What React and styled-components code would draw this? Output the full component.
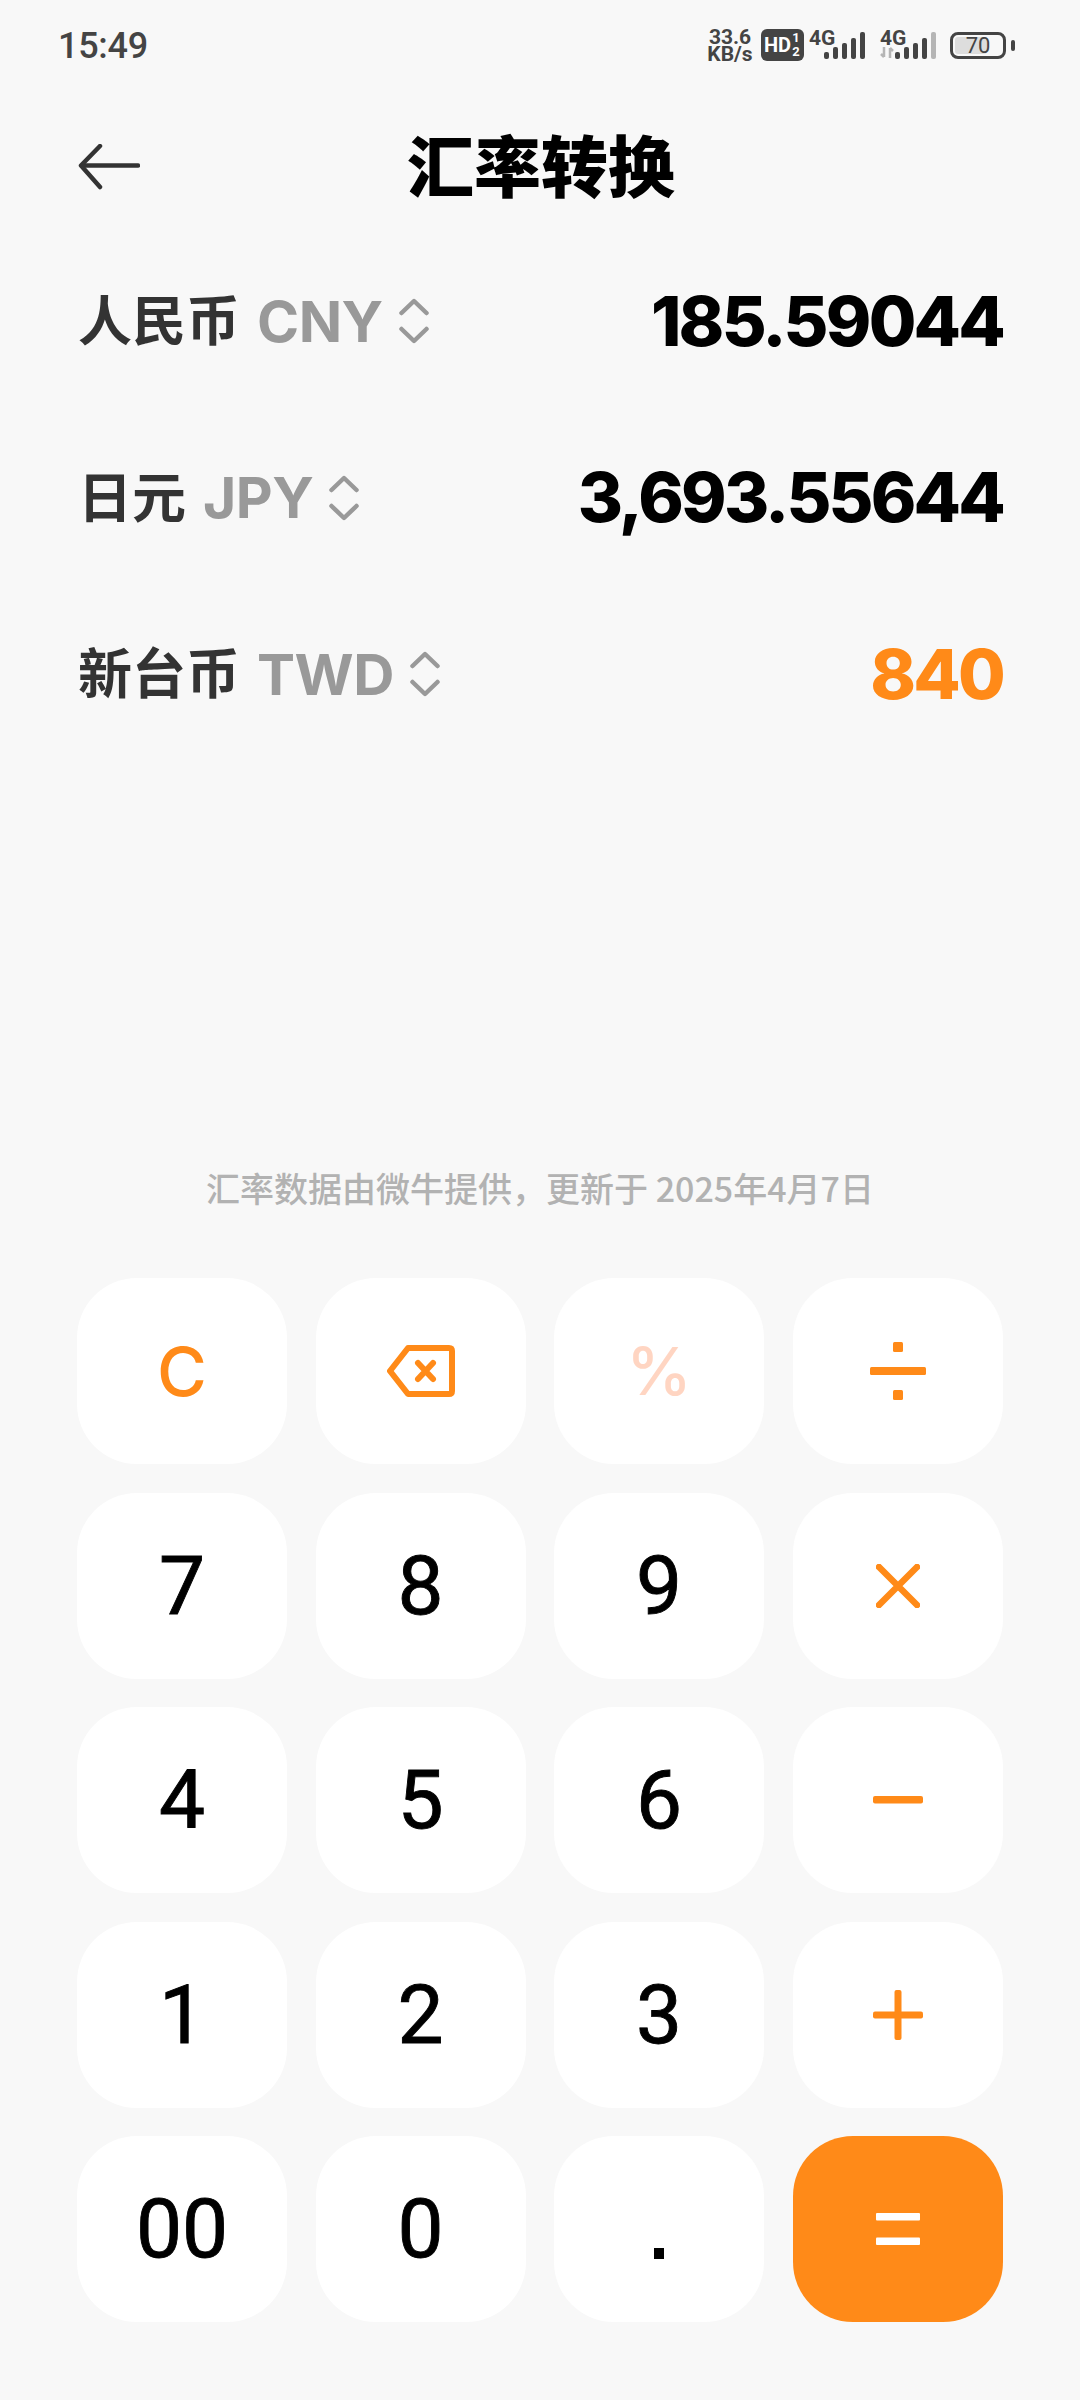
import React from "react";
import styled, { createGlobalStyle } from "styled-components";

const ORANGE = "#ff8a18";
const CJK = `"Noto Sans CJK SC", "Noto Sans", sans-serif`;
const LATIN = `Roboto, "Noto Sans CJK SC", sans-serif`;

const Global = createGlobalStyle`
  html, body { margin: 0; padding: 0; background: #f8f8f8; }
  * { box-sizing: border-box; }
`;

const Page = styled.div`
  width: 1080px;
  height: 2400px;
  background: #f8f8f8;
  display: flex;
  flex-direction: column;
  font-family: ${CJK};
  overflow: hidden;
`;

const StatusBar = styled.div`
  height: 90px;
  padding: 29px 74px 0 58px;
  display: flex;
  justify-content: space-between;
  align-items: flex-start;
  color: #444;
`;
const Clock = styled.div`
  margin-top: -2px;
  font: 500 36px/38px ${LATIN};
  letter-spacing: -0.3px;
`;
const StatusIcons = styled.div`
  display: flex;
  align-items: flex-start;
`;
const Speed = styled.div`
  font: 700 21px/17px ${LATIN};
  text-align: center;
  color: #444;
  width: 48px;
`;
const HdBadge = styled.div`
  margin-left: 7px;
  width: 43px;
  height: 32px;
  border-radius: 6px;
  background: #444;
  color: #fff;
  font: 700 20px/32px ${LATIN};
  padding-left: 3px;
  display: flex;
  align-items: center;
  gap: 1px;
`;
const HdFraction = styled.span`
  display: flex;
  flex-direction: column;
  font: 700 13px/14px ${LATIN};
  text-align: center;
`;
const Network = styled.div`
  position: relative;
  width: ${(p) => p.$w}px;
  height: 32px;
  margin-left: ${(p) => p.$ml}px;
`;
const NetLabel = styled.span`
  position: absolute;
  left: 0;
  top: 1px;
  font: 700 21px/17px ${LATIN};
  color: #444;
`;
const Battery = styled.div`
  margin-left: 13px;
  margin-top: 3px;
  width: 56px;
  height: 27px;
  border: 3px solid #444;
  border-radius: 8px;
  padding: 2px;
  position: relative;
  display: flex;
`;
const BatteryFill = styled.div`
  width: 70%;
  height: 100%;
  background: #ddd;
  border-radius: 3px;
`;
const BatteryText = styled.span`
  position: absolute;
  left: 0;
  right: 0;
  top: -1px;
  text-align: center;
  font: 400 22px/23px ${LATIN};
  color: #444;
`;
const BatteryNub = styled.div`
  position: absolute;
  right: -12px;
  top: 5px;
  width: 4px;
  height: 11px;
  border-radius: 2px;
  background: #444;
`;

const Header = styled.div`
  display: grid;
  grid-template-columns: 1fr auto 1fr;
  align-items: center;
  padding: 0 76px 0 78px;
  height: 100px;
  margin-top: 26px;
`;
const BackBtn = styled.div`
  display: flex;
  align-items: center;
  margin-top: 2px;
`;
const Title = styled.h1`
  margin: -6px 0 0;
  font: 900 67px/100px ${CJK};
  color: #000;
`;

const Rows = styled.div`
  display: flex;
  flex-direction: column;
  padding: 0 77px 0 78px;
  margin-top: 17px;
`;
const Row = styled.div`
  height: 176.5px;
  display: flex;
  align-items: center;
  justify-content: space-between;
`;
const Currency = styled.div`
  display: flex;
  align-items: center;
`;
const CurName = styled.span`
  font: 700 54px/1 ${CJK};
  color: #333;
  margin-bottom: 6px;
`;
const CurCode = styled.span`
  font: 700 57px/1 Inter, sans-serif;
  color: #999;
  margin-left: 17px;
  letter-spacing: -0.5px;
`;
const Chevrons = styled.svg`
  margin-left: 16px;
  width: 30px;
  height: 46px;
`;
const Value = styled.div`
  font: 800 69px/1 Inter, sans-serif;
  letter-spacing: -2.8px;
  color: ${(p) => (p.$active ? ORANGE : "#000")};
`;

const Spacer = styled.div`
  flex: 1;
`;
const Note = styled.div`
  text-align: center;
  font: 500 34px/40px ${CJK};
  color: #b2b2b2;
  height: 40px;
`;
const Keypad = styled.div`
  display: grid;
  grid-template-columns: repeat(4, 210px);
  grid-auto-rows: 186px;
  column-gap: 28.5px;
  row-gap: 28.5px;
  padding: 70px 77px 78px 77px;
`;
const Key = styled.div`
  background: ${(p) => (p.$primary ? ORANGE : "#fff")};
  border-radius: 60px;
  display: flex;
  align-items: center;
  justify-content: center;
  font: 400 82px/1 Roboto, sans-serif;
  -webkit-text-stroke: 0.9px currentColor;
  color: #000;
`;
const SymbolKey = styled(Key)`
  font: 500 ${(p) => p.$size}px/1 Inter, sans-serif;
  -webkit-text-stroke: 0;
  color: ${(p) => p.$color};
`;
const Dot = styled.span`
  margin-top: 48px;
  width: 10px;
  height: 11px;
  background: #000;
`;

const Bars = ({ dim }) => (
  <svg width="42" height="28" viewBox="0 0 42 28" style={{ position: "absolute", right: 0, top: 3 }}>
    <rect x="0" y="20" width="5" height="7" rx="2" fill="#444" />
    <rect x="9" y="15" width="5" height="12" rx="2" fill="#444" />
    <rect x="18" y="11" width="5" height="16" rx="2" fill="#444" />
    <rect x="27" y="6" width="5" height="21" rx="2" fill="#444" />
    <rect x="36" y="0" width="5" height="27" rx="2" fill={dim ? "#b5b5b5" : "#444"} />
  </svg>
);

const Chev = () => (
  <Chevrons viewBox="0 0 30 46" fill="none" stroke="#999" strokeWidth="4.5" strokeLinecap="round" strokeLinejoin="round">
    <path d="M2.5 15 L15 3 L27.5 15" />
    <path d="M2.5 31 L15 43 L27.5 31" />
  </Chevrons>
);

const Op = ({ children, w = 60, h = 60 }) => (
  <svg width={w} height={h} viewBox={`0 0 ${w} ${h}`} fill={ORANGE} stroke="none">
    {children}
  </svg>
);

const rows = [
  { name: "人民币", code: "CNY", value: "185.59044" },
  { name: "日元", code: "JPY", value: "3,693.55644" },
  { name: "新台币", code: "TWD", value: "840", active: true },
];

export default function App() {
  return (
    <Page>
      <Global />
      <StatusBar>
        <Clock>15:49</Clock>
        <StatusIcons>
          <Speed>33.6<br />KB/s</Speed>
          <HdBadge>
            HD
            <HdFraction><span>1</span><span>2</span></HdFraction>
          </HdBadge>
          <Network $w={57} $ml={5}>
            <NetLabel>4G</NetLabel>
            <Bars />
          </Network>
          <Network $w={57} $ml={14}>
            <NetLabel>4G</NetLabel>
            <svg width="14" height="12" viewBox="0 0 14 12" style={{ position: "absolute", left: 0, top: 18 }}>
              <path d="M4 0 V10 M1 7 L4 10 M10 11 V1 M13 4 L10 1" stroke="#b5b5b5" strokeWidth="2.5" fill="none" />
            </svg>
            <Bars dim />
          </Network>
          <Battery>
            <BatteryFill />
            <BatteryText>70</BatteryText>
            <BatteryNub />
          </Battery>
        </StatusIcons>
      </StatusBar>

      <Header>
        <BackBtn>
          <svg width="62" height="46" viewBox="0 0 62 46" fill="none" stroke="#333" strokeWidth="4.5" strokeLinecap="round" strokeLinejoin="round">
            <path d="M60 21.5 H4" />
            <path d="M22 2 L3 21.5 L22 43" />
          </svg>
        </BackBtn>
        <Title>汇率转换</Title>
        <span />
      </Header>

      <Rows>
        {rows.map((r) => (
          <Row key={r.code}>
            <Currency>
              <CurName>{r.name}</CurName>
              <CurCode>{r.code}</CurCode>
              <Chev />
            </Currency>
            <Value $active={r.active}>{r.value}</Value>
          </Row>
        ))}
      </Rows>

      <Spacer />
      <Note>汇率数据由微牛提供，更新于 2025年4月7日</Note>

      <Keypad>
        <SymbolKey $color={ORANGE} $size={68}>C</SymbolKey>
        <Key>
          <svg width="68" height="52" viewBox="0 0 68 52" fill="none" stroke={ORANGE} strokeWidth="6" strokeLinejoin="round" strokeLinecap="round">
            <path d="M21 3 H62 Q65 3 65 6 V46 Q65 49 62 49 H21 L3 26 Z" />
            <path d="M31 18 L46 34 M46 18 L31 34" />
          </svg>
        </Key>
        <SymbolKey $color="#ffd5c2" $size={66}>%</SymbolKey>
        <Key>
          <Op w={56} h={58}>
            <rect x="0" y="25" width="56" height="8" rx="1.5" />
            <rect x="23" y="0" width="10" height="10" rx="1.5" />
            <rect x="23" y="48" width="10" height="10" rx="1.5" />
          </Op>
        </Key>

        {["7", "8", "9"].map((d) => <Key key={d}>{d}</Key>)}
        <Key>
          <svg width="44" height="44" viewBox="0 0 44 44" stroke={ORANGE} strokeWidth="6.5" strokeLinecap="round">
            <path d="M3 3 L41 41 M41 3 L3 41" />
          </svg>
        </Key>

        {["4", "5", "6"].map((d) => <Key key={d}>{d}</Key>)}
        <Key>
          <Op w={50} h={8}><rect x="0" y="0" width="50" height="7.5" rx="2" /></Op>
        </Key>

        {["1", "2", "3"].map((d) => <Key key={d}>{d}</Key>)}
        <Key>
          <Op w={50} h={50}>
            <rect x="0" y="21.5" width="50" height="7" rx="2" />
            <rect x="21.5" y="0" width="7" height="50" rx="2" />
          </Op>
        </Key>

        <Key>00</Key>
        <Key>0</Key>
        <Key><Dot /></Key>
        <Key $primary>
          <svg width="44" height="32" viewBox="0 0 44 32" fill="#fff">
            <rect x="0" y="0" width="44" height="7.5" rx="1" />
            <rect x="0" y="24.5" width="44" height="7.5" rx="1" />
          </svg>
        </Key>
      </Keypad>
    </Page>
  );
}
